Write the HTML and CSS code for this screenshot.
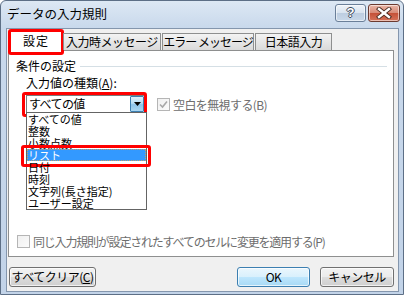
FILE: index.html
```html
<!DOCTYPE html>
<html lang="ja">
<head>
<meta charset="utf-8">
<link rel="stylesheet" href="styles.css">
</head>
<body>
<div class="window">
  <div class="titlebar">
    <div class="title">データの入力規則</div>
    <div class="tbtns">
      <div class="tbtn help"><span>?</span></div>
      <div class="tbtn close">
        <svg width="16" height="12" viewBox="0 0 16 12"><path d="M3 2 L13 10 M13 2 L3 10" stroke="#4a2a20" stroke-width="4.2" stroke-linecap="square"/><path d="M3 2 L13 10 M13 2 L3 10" stroke="#fff" stroke-width="2.4" stroke-linecap="square"/></svg>
      </div>
    </div>
  </div>
  <div class="client">
    <div class="tabs">
      <div class="tab active">設定<span class="mark mark-tab"></span></div>
      <div class="tab t2">入力時メッセージ</div>
      <div class="tab t3">エラー メッセージ</div>
      <div class="tab t4">日本語入力</div>
    </div>
    <div class="panel">
      <div class="group-title"><span>条件の設定</span><i class="rule"></i></div>
      <div class="label">入力値の種類(<u>A</u>):</div>
      <div class="row">
        <div class="combo">
          <span class="combo-text">すべての値</span>
          <span class="combo-btn"><svg width="7" height="4" viewBox="0 0 7 4"><path d="M0 0 H7 L3.5 4 Z" fill="#000"/></svg></span>
          <span class="mark mark-combo"></span>
          <ul class="list">
            <li>すべての値</li>
            <li>整数</li>
            <li>小数点数</li>
            <li class="sel">リスト<span class="mark mark-item"></span></li>
            <li>日付</li>
            <li>時刻</li>
            <li>文字列(長さ指定)</li>
            <li>ユーザー設定</li>
          </ul>
        </div>
        <div class="check disabled top-check">
          <span class="box checked"><svg width="9" height="9" viewBox="0 0 9 9"><path d="M1 4.5 L3.5 7 L8 1.5" fill="none" stroke="#a8a8a8" stroke-width="1.6"/></svg></span>
          <span class="ctext">空白を無視する(B)</span>
        </div>
      </div>
      <div class="check disabled bottom-check">
        <span class="box"></span>
        <span class="ctext long">同じ入力規則が設定されたすべてのセルに変更を適用する(P)</span>
      </div>
    </div>
    <div class="buttons">
      <div class="btn clear">すべてクリア(<u>C</u>)</div>
      <div class="spacer"></div>
      <div class="btn ok">OK</div>
      <div class="btn cancel">キャンセル</div>
    </div>
  </div>
</div>
</body>
</html>
```
FILE: styles.css
```css
* { box-sizing: border-box; }
html, body { margin: 0; padding: 0; }
body {
  width: 404px;
  height: 295px;
  overflow: hidden;
  font-family: "Noto Sans CJK JP", "Liberation Sans", sans-serif;
  font-size: 12px;
  color: #000;
  background: #fff;
}
.window {
  width: 404px;
  height: 295px;
  border: 1px solid #5d6f86;
  border-radius: 6px 6px 0 0;
  background: linear-gradient(#dde8f4 0px, #c9d9ec 26px, #c2d3e8 100%);
  display: flex;
  flex-direction: column;
}
.titlebar {
  height: 27px;
  display: flex;
  align-items: flex-start;
  justify-content: space-between;
  padding: 3px 3px 0 6px;
}
.title {
  font-size: 12.5px;
  line-height: 16px;
  margin-top: 2px;
  color: #000;
}
.tbtns { display: flex; gap: 2px; }
.tbtn {
  height: 18px;
  border: 1px solid #6a7f99;
  border-radius: 3px;
  display: flex;
  align-items: center;
  justify-content: center;
  box-shadow: inset 0 0 0 1px rgba(255,255,255,0.55);
}
.help {
  width: 31px;
  background: linear-gradient(#eef3f9 0%, #d8e3ef 50%, #bccde0 51%, #c9d8e9 100%);
}
.help span {
  font-family: "Liberation Sans", sans-serif;
  font-weight: bold;
  font-size: 13px;
  line-height: 14px;
  color: #fff;
  text-shadow: 1px 0 0 #3c4a5c, -1px 0 0 #3c4a5c, 0 1px 0 #3c4a5c, 0 -1px 0 #3c4a5c;
}
.close {
  width: 32px;
  border-color: #6b3a30;
  background: linear-gradient(#eab6a8 0%, #d88a76 50%, #c45138 51%, #d7735a 100%);
}
.close svg { display: block; }
.client {
  flex: 1;
  margin: 0 4px 2px 5px;
  background: #f0f0f0;
  border: 1px solid #8496ad;
  padding: 1px 4px 0 1px;
  display: flex;
  flex-direction: column;
}
.tabs {
  display: flex;
  align-items: flex-end;
  height: 20px;
  padding-left: 1px;
  position: relative;
  z-index: 2;
}
.tab {
  height: 17px;
  border: 1px solid #8e8f8f;
  border-bottom: none;
  background: linear-gradient(#f3f3f3, #e4e4e4 60%, #dadada);
  line-height: 15px;
  text-align: center;
  font-size: 12px;
  letter-spacing: -0.5px;
  white-space: nowrap;
  position: relative;
}
.tab.active {
  height: 21px;
  width: 54px;
  background: #fff;
  line-height: 19px;
  margin-bottom: -1px;
  letter-spacing: 1px;
}
.t2 { width: 98px; margin-left: 0; }
.t3 { width: 92px; margin-left: 1px; letter-spacing: -1px; }
.t4 { width: 77px; margin-left: 1px; }
.mark {
  position: absolute;
  border: 3px solid #ff0000;
  border-radius: 3px;
  pointer-events: none;
}
.mark-tab { left: -2px; right: -2px; top: -2px; bottom: -4px; }
.panel {
  height: 207px;
  border: 1px solid #8e8f8f;
  background: #fff;
  position: relative;
  z-index: 1;
  display: flex;
  flex-direction: column;
  padding: 8px 6px 0 7px;
}
.group-title {
  display: flex;
  align-items: center;
  line-height: 13px;
  height: 13px;
}
.group-title .rule {
  flex: 1;
  height: 1px;
  background: #d5dfe5;
  margin-left: 4px;
  margin-top: 1px;
}
.label {
  margin: 4px 0 0 10px;
  line-height: 13px;
  height: 13px;
}
.label u, .btn u { text-decoration: underline; }
.row {
  display: flex;
  align-items: center;
  margin-top: 6px;
  height: 18px;
}
.combo {
  position: relative;
  width: 119px;
  height: 18px;
  margin-left: 10px;
  border: 1px solid #7a7a7a;
  background: #fff;
  display: flex;
  align-items: center;
}
.combo-text {
  flex: 1;
  padding-left: 2px;
  line-height: 14px;
  letter-spacing: -0.6px;
}
.combo-btn {
  width: 14px;
  height: 16px;
  border: 1px solid #3c7fb1;
  border-radius: 1px;
  background: linear-gradient(#dff0fb 0%, #b6dcf4 45%, #8ec4ea 55%, #aad6f1 100%);
  display: flex;
  align-items: center;
  justify-content: center;
}
.combo-btn svg { display: block; }
.mark-combo { left: -5px; right: -3px; top: -4px; bottom: -5px; }
.list {
  position: absolute;
  left: -1px;
  top: 16px;
  width: 121px;
  margin: 0;
  padding: 0;
  list-style: none;
  border: 1px solid #646464;
  background: #fff;
  z-index: 3;
}
.list li {
  height: 12px;
  line-height: 12px;
  padding-left: 1px;
  font-size: 11px;
  letter-spacing: 0;
  position: relative;
  white-space: nowrap;
}
.list li.sel {
  background: #3399ff;
  color: #fff;
  outline: 1px dotted #c8a064;
  outline-offset: -1px;
}
.mark-item { left: -6px; right: -5px; top: -4px; bottom: -6px; }
.check {
  display: flex;
  align-items: center;
}
.top-check { margin-left: 12px; }
.box {
  width: 13px;
  height: 13px;
  border: 1px solid #b5b5b5;
  background: linear-gradient(135deg, #f0f0f0, #fbfbfb);
  display: flex;
  align-items: center;
  justify-content: center;
}
.ctext {
  margin-left: 3px;
  color: #6d6d6d;
  line-height: 13px;
  letter-spacing: -0.6px;
  white-space: nowrap;
}
.ctext.long { letter-spacing: -1.2px; }
.bottom-check {
  margin-top: auto;
  margin-bottom: 8px;
  margin-left: 1px;
}
.buttons {
  display: flex;
  align-items: center;
  padding: 10px 0 0 1px;
}
.spacer { flex: 1; }
.btn {
  height: 20px;
  border: 1px solid #707070;
  border-radius: 3px;
  background: linear-gradient(#f2f2f2 0%, #ebebeb 50%, #dddddd 51%, #cfcfcf 100%);
  box-shadow: inset 0 0 0 1px rgba(255,255,255,0.7);
  text-align: center;
  line-height: 18px;
  letter-spacing: -0.5px;
}
.clear { width: 87px; }
.ok { width: 73px; border-color: #3c7fb1; background: linear-gradient(#eaf6fd 0%, #d9f0fc 50%, #bee6fd 51%, #a7d9f5 100%); }
.cancel { width: 74px; margin-left: 10px; }
```
